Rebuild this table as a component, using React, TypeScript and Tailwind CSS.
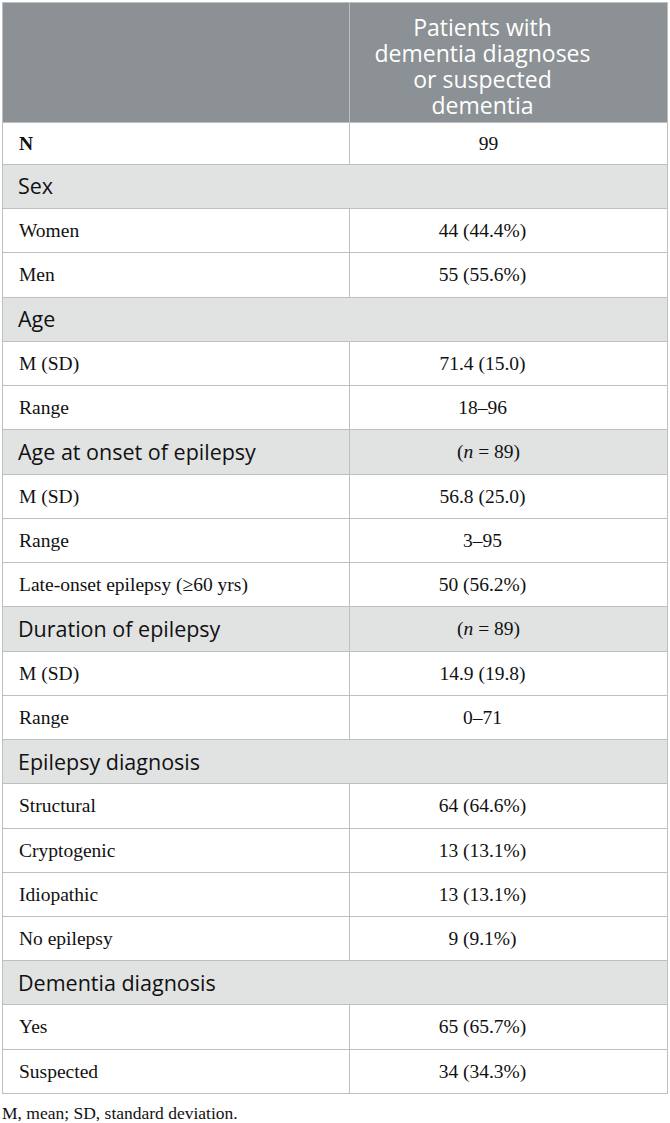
type Row =
  | { kind: 'section'; label: string; value?: React.ReactNode }
  | { kind: 'data'; label: React.ReactNode; value: React.ReactNode; bold?: boolean }

const nEq = (
  <span>
    (<i>n</i> = 89)
  </span>
)

const ROWS: Row[] = [
  { kind: 'section', label: 'Sex' },
  { kind: 'data', label: 'Women', value: '44 (44.4%)' },
  { kind: 'data', label: 'Men', value: '55 (55.6%)' },
  { kind: 'section', label: 'Age' },
  { kind: 'data', label: 'M (SD)', value: '71.4 (15.0)' },
  { kind: 'data', label: 'Range', value: '18–96' },
  { kind: 'section', label: 'Age at onset of epilepsy', value: nEq },
  { kind: 'data', label: 'M (SD)', value: '56.8 (25.0)' },
  { kind: 'data', label: 'Range', value: '3–95' },
  { kind: 'data', label: 'Late-onset epilepsy (≥60 yrs)', value: '50 (56.2%)' },
  { kind: 'section', label: 'Duration of epilepsy', value: nEq },
  { kind: 'data', label: 'M (SD)', value: '14.9 (19.8)' },
  { kind: 'data', label: 'Range', value: '0–71' },
  { kind: 'section', label: 'Epilepsy diagnosis' },
  { kind: 'data', label: 'Structural', value: '64 (64.6%)' },
  { kind: 'data', label: 'Cryptogenic', value: '13 (13.1%)' },
  { kind: 'data', label: 'Idiopathic', value: '13 (13.1%)' },
  { kind: 'data', label: 'No epilepsy', value: '9 (9.1%)' },
  { kind: 'section', label: 'Dementia diagnosis' },
  { kind: 'data', label: 'Yes', value: '65 (65.7%)' },
  { kind: 'data', label: 'Suspected', value: '34 (34.3%)' },
]

const serif = "font-['Liberation_Serif',serif]"
const sans = "font-['Open_Sans','Noto_Sans',sans-serif] [font-variant-ligatures:none]"

export default function App() {
  return (
    <div className="bg-white min-h-[1123px] w-[670px] pt-[2px] pl-[2px]">
      <table className="border-collapse w-[665px] table-fixed text-[#111]">
        <colgroup>
          <col className="w-[347px]" />
          <col className="w-[318px]" />
        </colgroup>
        <thead>
          <tr className="h-[120px] bg-[#8b9194]">
            <th className="border border-[#bcc0c0]" />
            <th className="border border-[#bcc0c0] pr-[52px] pt-[6px] align-middle">
              <div className={`${sans} font-normal text-white text-[23px] leading-[26px]`}>
                Patients with
                <br />
                dementia diagnoses
                <br />
                or suspected
                <br />
                dementia
              </div>
            </th>
          </tr>
        </thead>
        <tbody>
          <tr className="h-[42px]">
            <td className={`${serif} border border-[#bcc0c0] pl-[16px] text-[19.5px] font-bold`}>N</td>
            <td className={`${serif} border border-[#bcc0c0] pr-[40px] text-center text-[19.5px]`}>99</td>
          </tr>
          {ROWS.map((r, i) =>
            r.kind === 'section' ? (
              <tr key={i} className="h-[44.24px] bg-[#e1e3e3]">
                {r.value ? (
                  <>
                    <td className={`${sans} border border-[#bcc0c0] pl-[15px] text-[21.5px]`}>{r.label}</td>
                    <td className={`${serif} border border-[#bcc0c0] pr-[40px] text-center text-[19.5px]`}>{r.value}</td>
                  </>
                ) : (
                  <td colSpan={2} className={`${sans} border border-[#bcc0c0] pl-[15px] text-[21.5px]`}>
                    {r.label}
                  </td>
                )}
              </tr>
            ) : (
              <tr key={i} className="h-[44.24px]">
                <td className={`${serif} border border-[#bcc0c0] pl-[16px] text-[19.5px]`}>{r.label}</td>
                <td className={`${serif} border border-[#bcc0c0] pr-[52px] text-center text-[19.5px]`}>{r.value}</td>
              </tr>
            )
          )}
        </tbody>
      </table>
      <p className={`${serif} mt-[6px] text-[17.5px] text-[#111]`}>M, mean; SD, standard deviation.</p>
    </div>
  )
}
